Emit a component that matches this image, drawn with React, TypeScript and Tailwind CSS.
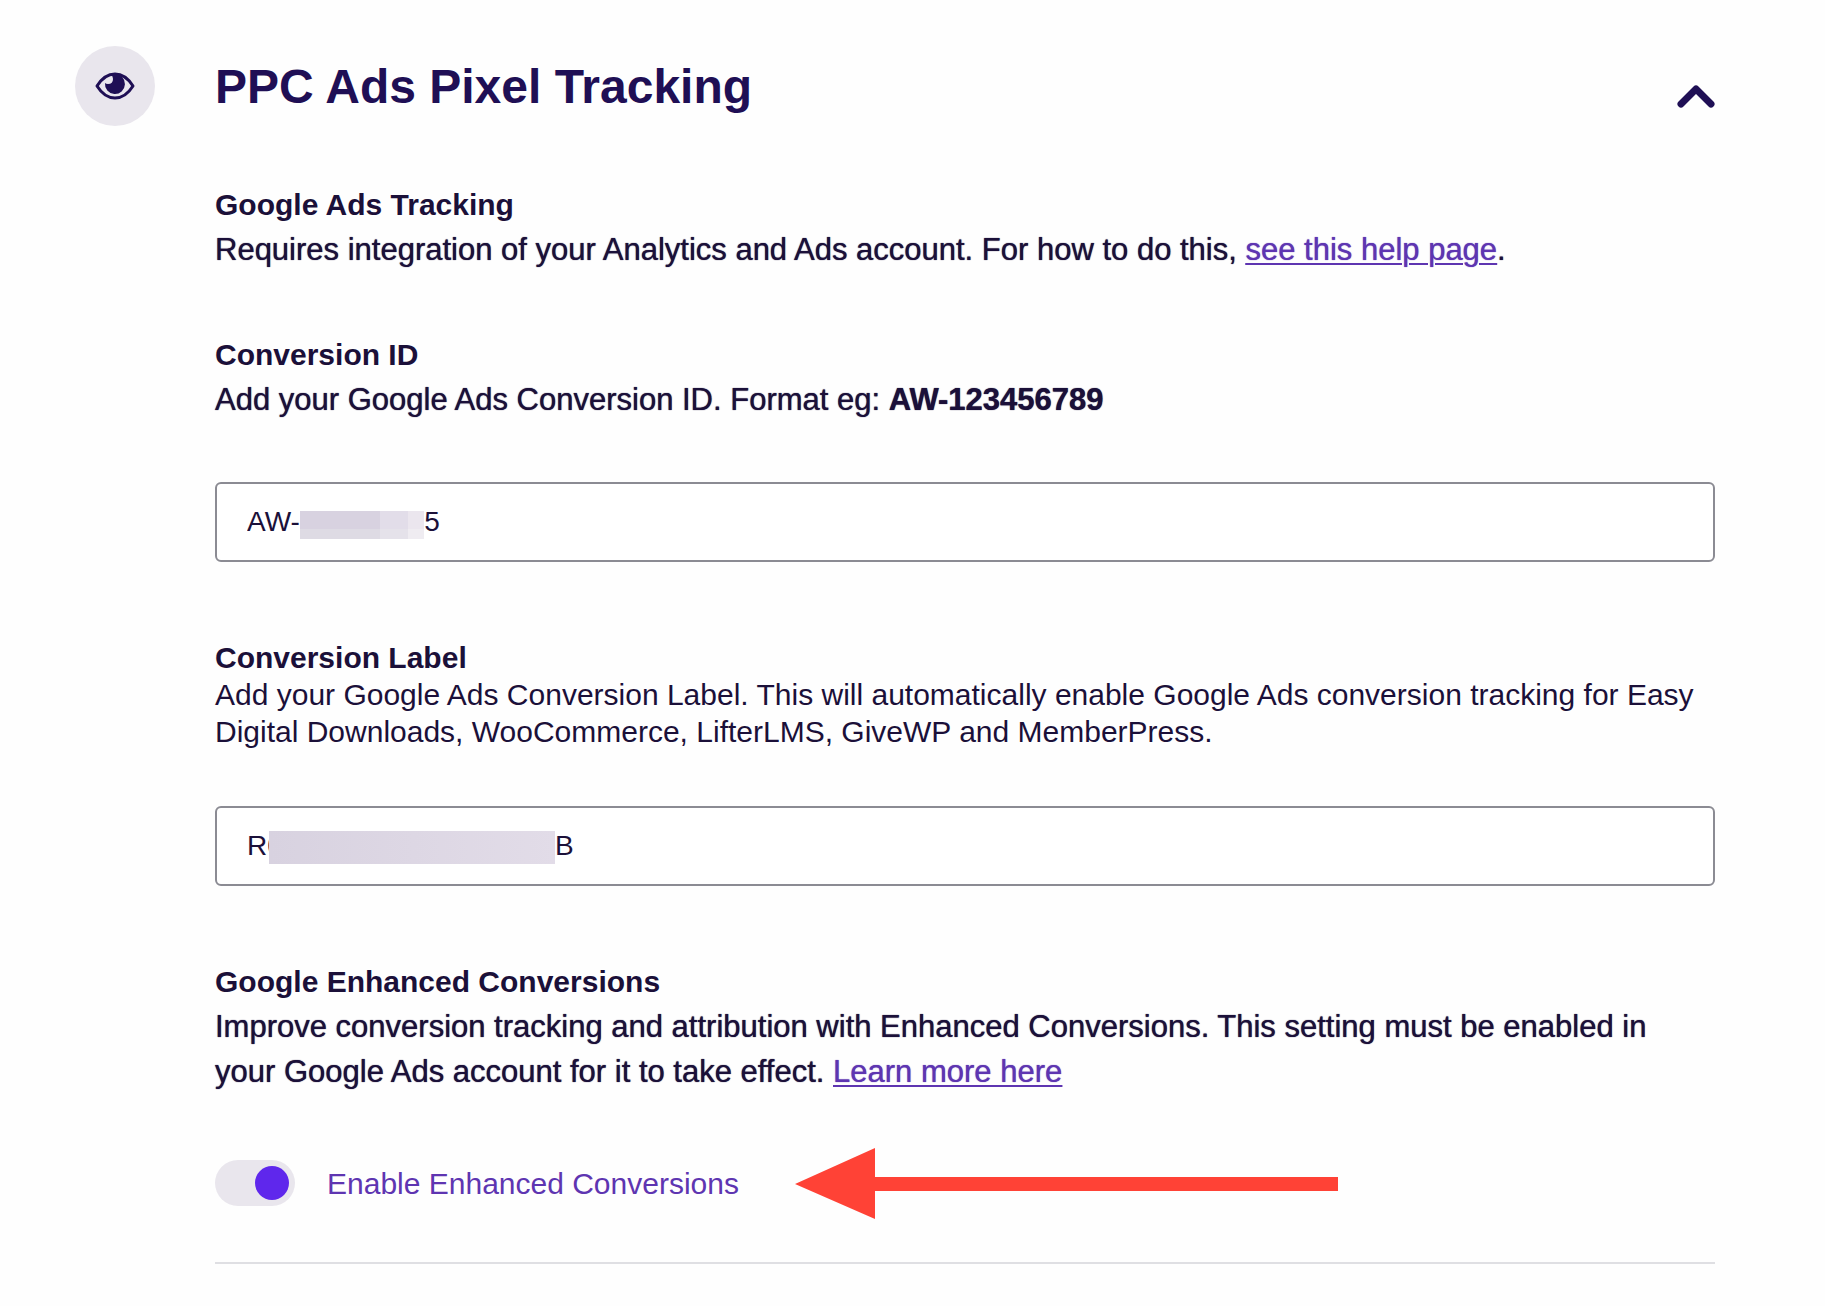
import { useState } from "react";
import type { ReactNode } from "react";

const HIDDEN_ID = " ".repeat(16);
const HIDDEN_LABEL = " ".repeat(35);

function TextField({ id, initial, children }: { id: string; initial: string; children: ReactNode }) {
  const [value, setValue] = useState(initial);
  return (
    <div className="relative">
      <input
        id={id}
        type="text"
        value={value}
        onChange={(e) => setValue(e.target.value)}
        className="block h-20 w-full rounded-md border-2 border-[#8b8b93] bg-white px-[30px] text-[28px] text-[#1b1039] outline-none"
      />
      {children}
    </div>
  );
}

function Note({ children }: { children: ReactNode }) {
  return <p className="pr-8 text-[31px] [text-shadow:0_0_1px_currentColor]">{children}</p>;
}

function TextLink({ children }: { children: ReactNode }) {
  return (
    <a href="#help" className="text-[#5e35b1] underline decoration-2 underline-offset-3">
      {children}
    </a>
  );
}

export default function App() {
  const [open, setOpen] = useState(true);
  const [enabled, setEnabled] = useState(true);

  return (
    <main className="flex min-h-screen items-start gap-15 bg-[#fefefe] pt-[46px] pr-[110px] pb-11 pl-[75px] font-['Liberation_Sans',Arial,sans-serif] text-[30px] leading-[45px] text-[#1b1039]">
      <div className="flex size-20 shrink-0 items-center justify-center rounded-full bg-[#e9e6ed] text-[#1f0f55]">
        <svg width="42" height="28" viewBox="0 0 42 28" fill="none" aria-hidden="true">
          <path d="M3 14C8 6 14 2 21 2S34 6 39 14C34 22 28 26 21 26S8 22 3 14Z" stroke="currentColor" strokeWidth="3" strokeLinejoin="round" />
          <path d="M21 2A10 10 0 1 1 11 11Q12 12 14 12Q19 12 19 7Q19 4 17 3Q19 2 21 2Z" fill="currentColor" />
        </svg>
      </div>

      <div className="min-w-0 flex-1">
        <header className="flex h-20 items-center justify-between text-[#1f0f55]">
          <h1 className="text-[48px] font-bold">PPC Ads Pixel Tracking</h1>
          <button type="button" aria-label="Toggle section" aria-expanded={open} onClick={() => setOpen(!open)} className="pt-5">
            <svg width="38" height="24" viewBox="0 0 38 24" fill="none">
              <path d="M4 20 19 5 34 20" stroke="currentColor" strokeWidth="7" strokeLinecap="round" strokeLinejoin="round" />
            </svg>
          </button>
        </header>

        {open && (
          <div className="border-b-2 border-[#dfdfe3] pt-14 pb-14">
            <section>
              <h2 className="font-bold">Google Ads Tracking</h2>
              <Note>
                Requires integration of your Analytics and Ads account. For how to do this, <TextLink>see this help page</TextLink>.
              </Note>
            </section>

            <section className="pt-15">
              <label htmlFor="conversion-id" className="block font-bold">Conversion ID</label>
              <div className="mb-15">
                <Note>
                  Add your Google Ads Conversion ID. Format eg: <strong>AW-123456789</strong>
                </Note>
              </div>
              <TextField id="conversion-id" initial={`AW-${HIDDEN_ID}5`}>
                <div className="absolute top-[29px] left-[85px] grid h-7 w-[124px] grid-cols-[80px_28px_16px] grid-rows-[18px_10px]">
                  <span className="bg-[#d8d2e0]" />
                  <span className="bg-[#e2dde9]" />
                  <span className="bg-[#ebe6ee]" />
                  <span className="bg-[#dedbe4]" />
                  <span className="bg-[#e5e2ea]" />
                  <span className="bg-[#efecf1]" />
                </div>
              </TextField>
            </section>

            <section className="pt-[77px]">
              <label htmlFor="conversion-label" className="block leading-[37px] font-bold">Conversion Label</label>
              <p className="mb-14 leading-[37px]">
                Add your Google Ads Conversion Label. This will automatically enable Google Ads conversion tracking for Easy Digital Downloads, WooCommerce, LifterLMS, GiveWP and MemberPress.
              </p>
              <TextField id="conversion-label" initial={`R0${HIDDEN_LABEL}B`}>
                <div className="absolute top-[25px] left-[54px] h-[33px] w-[286px] bg-linear-to-r from-[#d8d2e0] to-[#e2dce8]" />
              </TextField>
            </section>

            <section className="pt-[73px]">
              <h2 className="font-bold">Google Enhanced Conversions</h2>
              <Note>
                Improve conversion tracking and attribution with Enhanced Conversions. This setting must be enabled in your Google Ads account for it to take effect. <TextLink>Learn more here</TextLink>
              </Note>
            </section>

            <div className="flex items-center pt-[66px]">
              <label className="flex cursor-pointer items-center gap-8 text-[#5e35b1]">
                <input
                  type="checkbox"
                  role="switch"
                  checked={enabled}
                  onChange={(e) => setEnabled(e.target.checked)}
                  className="flex h-[46px] w-20 appearance-none items-center rounded-full bg-[#e9e6ed] px-[6px] before:size-[34px] before:rounded-full before:bg-[#8b8b93] checked:justify-end checked:before:bg-[#5f27ec]"
                />
                Enable Enhanced Conversions
              </label>
              <svg className="-my-4 ml-14 shrink-0" width="543" height="72" viewBox="0 0 543 72" aria-hidden="true">
                <path d="M0 37 80 1V30H543V44H80V72Z" fill="#ff4236" />
              </svg>
            </div>
          </div>
        )}
      </div>
    </main>
  );
}
